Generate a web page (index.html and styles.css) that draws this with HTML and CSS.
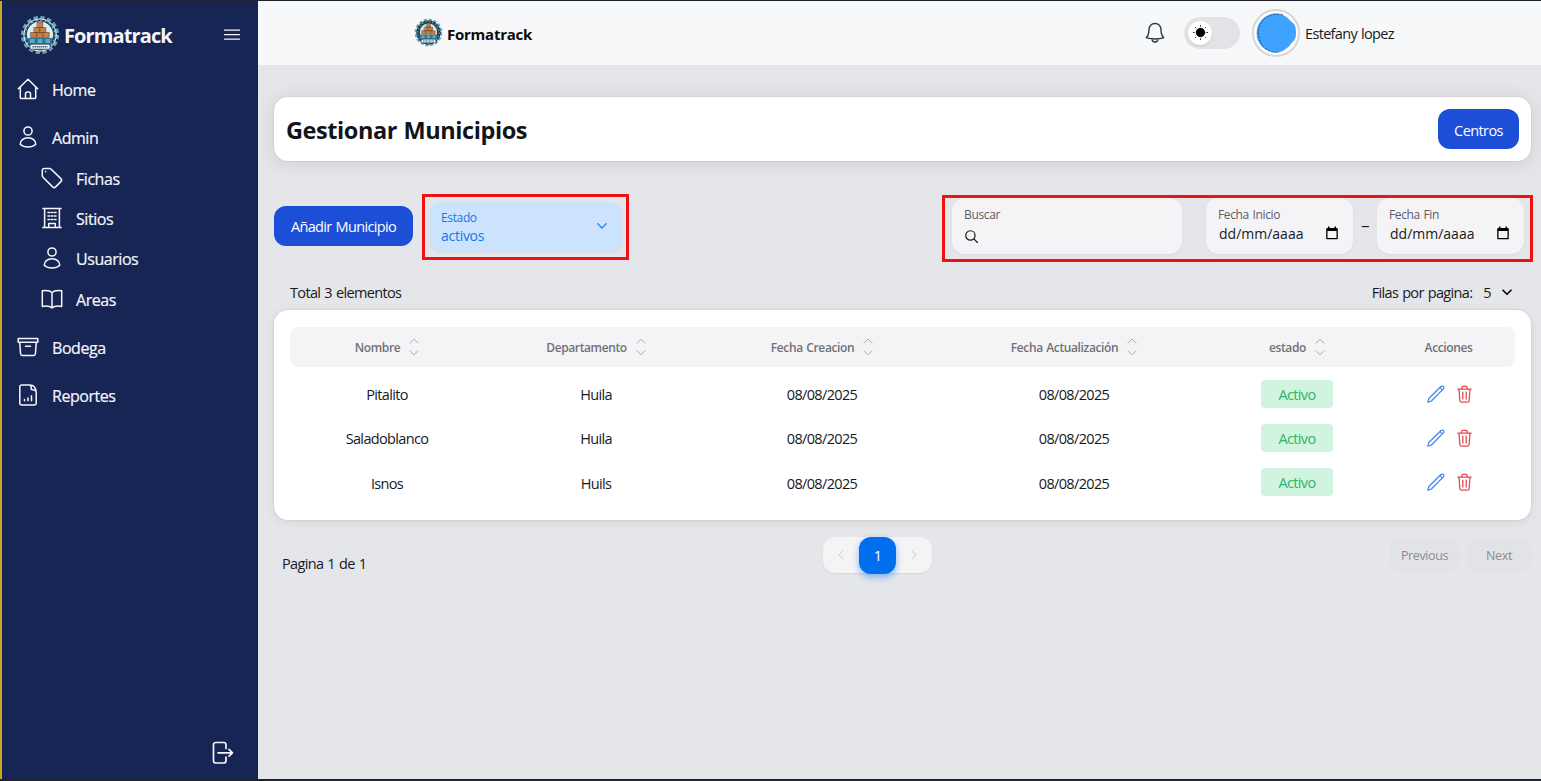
FILE: index.html
```html
<!DOCTYPE html>
<html lang="es">
<head>
<meta charset="utf-8">
<title>Formatrack</title>
<link rel="stylesheet" href="styles.css">
</head>
<body>
<svg class="defs" aria-hidden="true">
  <symbol id="logo" viewBox="0 0 40 40">
    <circle cx="20" cy="20" r="17.600" fill="none" stroke="#6ba3b8" stroke-width="3" stroke-linecap="butt" stroke-dasharray="4.300 2.600"/>
    <circle cx="20" cy="20" r="16.200" fill="#174e66"/>
    <circle cx="20" cy="20" r="15" fill="none" stroke="#8cbccb" stroke-width="1.400" stroke-linecap="butt" stroke-dasharray="1.700 3"/>
    <circle cx="20" cy="19.500" r="12.600" fill="#d9edf3"/>
    <path stroke="none" d="M8 23h24v5a14 14 0 0 1-24 0z" fill="#2b7598"/>
    <path stroke="none" d="M10 24h4.500v4H10zM17.800 24h4.500v4h-4.500zM25.500 24H30v4h-4.500z" fill="#62a8c6"/>
    <g fill="#c87f43" stroke="#70401f" stroke-width=".6"><path d="M17.300 7.500h5.400v5h-5.400zM14.200 12.500h5.600v5h-5.600zM20.200 12.500h5.600v5h-5.600zM10.800 17.500h5.800v5h-5.800zM17.100 17.500h5.800v5h-5.800zM23.400 17.500h5.800v5h-5.800z"/></g>
    <rect x="10" y="29.200" width="20" height="5" rx="1.200" fill="#f4f7f5" stroke="#174b61" stroke-width=".8"/>
    <path d="M12.500 31.700h15" stroke="#38505c" stroke-width="1.500" stroke-linecap="butt" stroke-dasharray="1.400 .6"/>
  </symbol>
  <symbol id="user" viewBox="0 0 22 22"><circle cx="11" cy="5" r="4.1"/><path d="M3.200 18.300c0-3.800 3.200-6.600 7.800-6.600s7.800 2.800 7.800 6.600c-2 1.900-4.800 2.800-7.800 2.800s-5.800-.9-7.800-2.800z"/></symbol>
  <symbol id="sort" viewBox="0 0 10 18"><path d="M1 5.200 5 1.200l4 4M1 12.800l4 4 4-4"/></symbol>
  <symbol id="edit" viewBox="0 0 18 18"><path d="m.8 17.200 1-3.700L14 1.500a1.650 1.650 0 0 1 2.400 0 1.650 1.650 0 0 1 0 2.400L4.400 16zM13 2.600l2.300 2.300"/></symbol>
  <symbol id="trash" viewBox="0 0 15 18"><path d="M.8 4.100h13.400M4.500 3.900l.8-2.600h4.400l.8 2.600M2 4.300l.9 11.500c.1.900.6 1.400 1.500 1.400h6.200c.9 0 1.400-.5 1.500-1.400L13 4.300M5.800 7.100v7M9.200 7.100v7"/></symbol>
  <symbol id="calendar" viewBox="0 0 12 14"><path fill="currentColor" stroke="none" d="M2 .6h1.500V2h5V.6H10V2h.7c.7 0 1.100.5 1.100 1.100v9.100c0 .7-.4 1.100-1.100 1.100H1.300c-.7 0-1.100-.4-1.100-1.100V3.100C.2 2.500.6 2 1.300 2H2zM1.500 5v7h9V5z"/></symbol>
</svg>

<div class="app">
  <aside class="sidebar">
    <div class="brand">
      <svg class="brand-logo"><use href="#logo"/></svg>
      <span class="brand-name">Formatrack</span>
      <svg class="burger" viewBox="0 0 16 12"><path d="M.5 1.200h15M.5 5.700h15M.5 10.200h15"/></svg>
    </div>
    <nav class="nav">
      <a class="item"><svg class="icon" viewBox="0 0 22 22"><path d="M1.300 10.800 11 1.200l9.700 9.600M3.300 9v10.400c0 .8.5 1.200 1.200 1.200h13c.7 0 1.200-.4 1.200-1.200V9M8.500 20.600v-4.500c0-1.200.8-2 2-2h1c1.200 0 2 .8 2 2v4.500"/></svg><span>Home</span></a>
      <div class="group">
        <a class="item"><svg class="icon"><use href="#user"/></svg><span>Admin</span></a>
        <a class="item sub"><svg class="icon" viewBox="0 0 22 22"><path d="M1.300 3.300v5.200c0 .7.200 1.200.7 1.700l9.900 9.900c.7.700 1.800.7 2.500 0l5.700-5.700c.7-.7.7-1.800 0-2.500l-9.900-9.700c-.5-.5-1-.8-1.700-.8H3.300c-1.200 0-2 .8-2 1.900z"/><path d="M4.600 4.400v.4"/></svg><span>Fichas</span></a>
        <a class="item sub"><svg class="icon" viewBox="0 0 22 22"><path d="M1.800 20.500h18.400M3.600 20.500v-19M18.400 20.500v-19M2 1.500h18M7.700 20.300v-3.800h6.600v3.800M7 5.500h1.600M10.200 5.500h1.600M13.400 5.500H15M7 9h1.600M10.200 9h1.600M13.400 9H15M7 12.500h1.600M10.200 12.500h1.600M13.400 12.500H15"/></svg><span>Sitios</span></a>
        <a class="item sub"><svg class="icon"><use href="#user"/></svg><span>Usuarios</span></a>
        <a class="item sub"><svg class="icon" viewBox="0 0 22 22"><path d="M11 4.500C9.500 3 5 2.200 1.300 2.800v15.600c3.700-.6 8.200.1 9.700 1.600 1.500-1.500 6-2.200 9.700-1.600V2.800C17 2.200 12.500 3 11 4.500zM11 4.500V20"/></svg><span>Areas</span></a>
      </div>
      <a class="item"><svg class="icon" viewBox="0 0 22 22"><path d="M1.200 2.500h19.600v3.700H1.200zM2.700 6.400l.9 11.300c.1 1.200.8 1.900 2 1.900h10.800c1.200 0 1.900-.7 2-1.900l.9-11.300M8.500 10.300h5"/></svg><span>Bodega</span></a>
      <a class="item"><svg class="icon" viewBox="0 0 22 22"><path d="M13 1H4.800C3.500 1 2.800 1.700 2.800 3v16c0 1.300.7 2 2 2h12.400c1.300 0 2-.7 2-2V8.500C19.200 4 16.500 1 13 1zM13 1c1.200.6 1.300 1.600 1.300 4.500 2.600 0 4.500.6 4.900 3M7.500 16.800v-1.300M11 16.800V14M14.500 16.800v-5"/></svg><span>Reportes</span></a>
    </nav>
    <svg class="logout" viewBox="0 0 22 24"><path d="M14 7.500V3.700c0-1.400-.9-2.200-2.300-2.200H3.800c-1.400 0-2.300.8-2.300 2.200v16.100c0 1.400.9 2.200 2.300 2.200h7.900c1.400 0 2.300-.8 2.300-2.200v-3.800M6 11.800h14.300M17 8.400l3.500 3.400-3.500 3.400"/></svg>
  </aside>

  <div class="main">
    <header class="topbar">
      <svg class="top-logo"><use href="#logo"/></svg>
      <span class="top-name">Formatrack</span>
      <svg class="bell" viewBox="0 0 20 22"><path d="M10 1.500c-3.600 0-6 2.500-6 6 0 4.600-1 6.600-2.800 8.200 2.500.9 5.600 1.300 8.800 1.300s6.300-.4 8.800-1.300C17 14.100 16 12.100 16 7.500c0-3.500-2.400-6-6-6zM6.900 17c.2 2 1.400 3 3.100 3s2.900-1 3.100-3"/></svg>
      <div class="toggle"><div class="thumb"><svg viewBox="0 0 16 16"><circle cx="8" cy="8" r="4.500"/><path d="M8 .6v.6M8 14.800v.6M.6 8h.6M14.800 8h.6M2.700 2.700l.4.4M12.900 12.900l.4.400M2.700 13.300l.4-.4M12.900 3.100l.4-.4"/></svg></div></div>
      <div class="avatar"><svg viewBox="0 0 40 40"><path d="M20 .5A19.500 19.500 0 0 1 35 8.500C39.500 11 40 15 40 20s-1 7-4 9.500C32 35 27 39.500 20 39.500A19.500 19.500 0 0 1 20 .5z" fill="#40a2ff" stroke="none"/><path d="M27 1.900C14-1.800 2.500 7 2.500 20S13 41 23 39" fill="none" stroke="#234d77" stroke-width=".8" stroke-linecap="butt" stroke-dasharray="2.500 1"/></svg></div>
      <span class="username">Estefany lopez</span>
    </header>

    <main class="content">
      <section class="title-card"><h1>Gestionar Municipios</h1><button class="btn centros">Centros</button></section>

      <section class="toolbar">
        <button class="btn add">Añadir Municipio</button>
        <div class="select">
          <div><div class="label">Estado</div><div class="value">activos</div></div>
          <svg viewBox="0 0 10 6"><path d="M.7.7 5 5 9.300.7"/></svg>
          <i class="mark"></i>
        </div>
        <div class="filters">
          <div class="field search"><div class="label">Buscar</div><svg viewBox="0 0 12 12"><circle cx="5" cy="5" r="4.300"/><path d="m8.200 8.200 3.300 3.300"/></svg></div>
          <div class="field date"><div class="label">Fecha Inicio</div><div class="value"><span>dd/mm/aaaa</span><svg><use href="#calendar"/></svg></div></div>
          <span class="dash">–</span>
          <div class="field date"><div class="label">Fecha Fin</div><div class="value"><span>dd/mm/aaaa</span><svg><use href="#calendar"/></svg></div></div>
          <i class="mark"></i>
        </div>
      </section>

      <div class="summary"><span class="total">Total 3 elementos</span><span class="per-page">Filas por pagina:</span><span class="count">5</span><svg viewBox="0 0 10 7"><path d="M1 1.200 5 5.200l4-4"/></svg></div>

      <section class="table">
        <div class="row head">
          <span>Nombre<svg><use href="#sort"/></svg></span><span>Departamento<svg><use href="#sort"/></svg></span><span>Fecha Creacion<svg><use href="#sort"/></svg></span><span>Fecha Actualización<svg><use href="#sort"/></svg></span><span>estado<svg><use href="#sort"/></svg></span><span>Acciones</span>
        </div>
        <div class="row"><span>Pitalito</span><span>Huila</span><span>08/08/2025</span><span>08/08/2025</span><span><b class="badge">Activo</b></span><span class="actions"><svg class="edit"><use href="#edit"/></svg><svg class="trash"><use href="#trash"/></svg></span></div>
        <div class="row"><span>Saladoblanco</span><span>Huila</span><span>08/08/2025</span><span>08/08/2025</span><span><b class="badge">Activo</b></span><span class="actions"><svg class="edit"><use href="#edit"/></svg><svg class="trash"><use href="#trash"/></svg></span></div>
        <div class="row"><span>Isnos</span><span>Huils</span><span>08/08/2025</span><span>08/08/2025</span><span><b class="badge">Activo</b></span><span class="actions"><svg class="edit"><use href="#edit"/></svg><svg class="trash"><use href="#trash"/></svg></span></div>
      </section>

      <footer class="pager">
        <span class="page-info">Pagina 1 de 1</span>
        <div class="pages"><svg viewBox="0 0 6 10"><path d="M5 1 1 5l4 4"/></svg><span>1</span><svg viewBox="0 0 6 10"><path d="m1 1 4 4-4 4"/></svg></div>
        <div class="steps"><button class="prev">Previous</button><button class="next">Next</button></div>
      </footer>
    </main>
  </div>
</div>
</body>
</html>
```
FILE: styles.css
```css
* { box-sizing: border-box; }
body {
  margin: 0;
  font-family: "Open Sans", "Noto Sans", sans-serif;
  font-size: 14.5px;
  letter-spacing: -0.045em;
  word-spacing: 0.06em;
  color: #18191d;
}
svg { display: block; flex: none; fill: none; stroke: currentColor; stroke-linecap: round; stroke-linejoin: round; }
button { border: 0; font: inherit; letter-spacing: inherit; word-spacing: inherit; padding: 0; }
.defs { position: absolute; width: 0; height: 0; }
.app {
  display: flex;
  width: 1541px;
  height: 781px;
  overflow: hidden;
  border-top: 1px solid #20222e;
  border-bottom: 2px solid #20222e;
  background: #e5e6ea;
}

.sidebar {
  display: flex;
  flex-direction: column;
  width: 258px;
  flex: none;
  border-left: 2px solid #c3a91c;
  background: #172554;
  color: #f4f6fb;
}
.brand { display: flex; align-items: center; height: 68px; padding: 0 18px; }
.brand-logo { width: 40px; height: 40px; }
.brand-name { margin: 0 0 0 4px; font-size: 20px; font-weight: 700; letter-spacing: -0.044em; }
.burger { width: 16px; height: 12px; margin-left: auto; stroke-width: 1.2; }
.nav { display: flex; flex-direction: column; gap: 8px; }
.item { display: flex; align-items: center; gap: 13px; height: 40.3px; padding-left: 15px; font-size: 16px; font-weight: 500; letter-spacing: -0.028em; -webkit-text-stroke: 0.2px; }
.item.sub { padding-left: 39px; }
.item span { padding-top: 2px; }
.icon { width: 22px; height: 22px; stroke-width: 1.5; }
.logout { width: 22px; height: 24px; margin: auto 0 14px 210px; stroke-width: 1.7; }

.main { flex: 1; }
.topbar { display: flex; align-items: center; height: 64px; padding: 0 0 1px 156px; background: #f7f8fa; }
.top-logo { width: 29px; height: 29px; }
.top-name { width: 702px; padding: 2px 0 0 4px; color: #0a0a0b; font-weight: 700; font-size: 15px; letter-spacing: -0.016em; }
.bell { width: 20px; height: 22px; stroke: #2e3448; stroke-width: 1.4; }
.toggle { width: 56px; height: 32px; margin-left: 19px; padding: 4px; border-radius: 16px; background: #e3e3e7; }
.thumb { display: grid; place-items: center; width: 24px; height: 24px; border-radius: 50%; background: #fff; box-shadow: 0 1px 2px #0002; color: #000; }
.thumb svg { width: 15px; height: 15px; fill: #000; stroke-width: 1; }
.avatar { display: grid; place-items: center; width: 48px; height: 48px; margin-left: 12px; border: 2px solid #d5d5da; border-radius: 50%; background: #fff; }
.avatar svg { width: 40px; height: 40px; }
.username { margin-left: 5px; padding-top: 2px; letter-spacing: -0.046em; }

.content { padding: 32px 10px 0 16px; }
.title-card { display: flex; align-items: center; justify-content: space-between; height: 64px; padding: 0 12px; border-radius: 14px; background: #fff; box-shadow: 0 2px 20px #0000001c, 0 0 2px #0002; }
h1 { margin: 1px 0 0; font-size: 23.5px; font-weight: 700; letter-spacing: -0.018em; color: #11151b; }
.btn { height: 40px; padding-top: 2px; border-radius: 12px; background: #1d4ed8; color: #fff; }
.centros { width: 81px; letter-spacing: -0.04em; }
.toolbar { display: flex; height: 65px; margin-top: 34px; }
.add { width: 139px; margin-top: 11px; padding-top: 1px; }
.select { position: relative; display: flex; align-items: center; justify-content: space-between; width: 193px; height: 49px; margin: 7px 0 0 16px; padding: 1px 15px 0 12px; border-radius: 12px; background: #cce3fd; color: #1778e8; box-shadow: 0 1px 3px #0001; }
.select svg { width: 10px; height: 6px; margin-bottom: 2px; stroke-width: 1.2; }
.label { font-size: 12px; line-height: 16px; letter-spacing: -0.03em; }
.select .value { line-height: 19px; font-size: 14px; letter-spacing: -0.02em; }
.filters { position: relative; display: flex; height: 56px; margin: 3px 7px 0 auto; }
.field { display: flex; flex-direction: column; height: 56px; padding: 9px 12px 0; border-radius: 13px; background: #f4f4f6; box-shadow: 0 1px 3px #0000000d; }
.field .label { color: #5d5d66; }
.search { width: 230px; margin-right: 24px; }
.search svg { width: 13px; height: 13px; margin: 7px 0 0 1px; stroke-width: 1.1; }
.date { width: 147px; }
.date .value { display: flex; align-items: center; justify-content: space-between; height: 20px; padding: 0 3px 0 1px; letter-spacing: 0; font-size: 14px; }
.date .value svg { width: 12px; height: 14px; color: #000; }
.dash { width: 24px; padding-top: 18px; text-align: center; transform: scaleX(1.2); }
.mark { position: absolute; border: 3px solid #f01212; pointer-events: none; }
.select .mark { inset: -8px -7px -9px; }
.filters .mark { inset: -3px -9px -8px -10px; }

.summary { display: flex; align-items: center; height: 26px; margin-top: 19px; padding: 0 19px 0 16px; }
.per-page { margin-left: auto; }
.count { margin: 0 11px; }
.summary svg { width: 10px; height: 7px; stroke: #000; stroke-width: 1.6; }
.table { height: 210px; margin-top: 5px; padding: 17px 16px 0; border-radius: 14px; background: #fff; box-shadow: 0 2px 10px #00000014, 0 0 2px #0002; }
.row { display: grid; grid-template-columns: 194px 224px 228px 276px 170px 133px; height: 44.3px; }
.row > span { display: flex; align-items: center; justify-content: center; padding-top: 1px; }
.head { height: 40px; margin-bottom: 5px; border-radius: 8px; background: #f4f4f6; color: #71717a; font-size: 12px; font-weight: 600; letter-spacing: -0.032em; }
.row.head > span { padding: 0; }
.head svg { width: 10px; height: 18px; margin-left: 9px; stroke: #a9a9b0; stroke-width: 1; }
.badge { display: grid; place-items: center; width: 72px; height: 28px; margin-top: -2px; padding-top: 1px; border-radius: 4px; background: #d1f4e0; color: #2bb765; font-weight: 400; }
.actions { gap: 12px; }
.edit { width: 18px; height: 18px; stroke: #3d82f0; stroke-width: 1.2; }
.trash { width: 15px; height: 18px; stroke: #e64b50; stroke-width: 1.3; }
.row > .actions { padding: 0 0 1px 1px; }

.pager { display: flex; align-items: flex-start; margin-top: 17px; padding-left: 8px; }
.page-info { width: 541px; padding-top: 17px; }
.pages { display: flex; align-items: center; justify-content: space-between; width: 109px; height: 36px; border-radius: 12px; background: #f4f4f5; box-shadow: 0 1px 2px #0001; }
.pages span { display: grid; place-items: center; width: 37px; height: 37px; border-radius: 12px; background: #006fee; color: #fff; box-shadow: 0 3px 7px #006fee77; }
.pages svg { width: 6px; height: 10px; margin: 0 15px; stroke: #c9c9ce; }
.steps { display: flex; gap: 8px; margin: 2px 0 0 auto; }
.steps button { height: 32px; border-radius: 8px; background: #e2e3e7; color: #8b8c92; font-size: 12.5px; letter-spacing: -0.03em; }
.prev { width: 69px; }
.next { width: 64px; }
```
